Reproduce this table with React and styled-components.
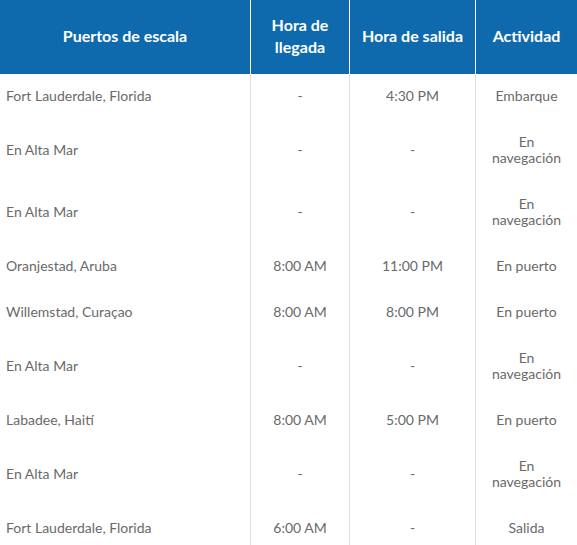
import React from "react";
import styled, { createGlobalStyle } from "styled-components";

const Global = createGlobalStyle`
  html, body { margin: 0; padding: 0; background: #fff; }
  body { font-family: Lato, "Open Sans", sans-serif; }
`;

const Table = styled.table`
  width: 577px;
  table-layout: fixed;
  border-collapse: separate;
  border-spacing: 0;
`;

const Th = styled.th`
  background: #0f6aad;
  color: #fff;
  font-weight: 700;
  font-size: 16px;
  line-height: 22px;
  padding: 14px 6px 16px;
  height: 44px;
  text-align: center;
  vertical-align: middle;
  border-left: ${(p) => (p.$first ? "none" : "1px solid #fff")};
`;

const Td = styled.td`
  color: #6a6a6a;
  font-size: 14px;
  font-weight: 400;
  line-height: 16px;
  padding: 14px ${(p) => (p.$left ? "6px" : "8px")} 16px;
  text-align: ${(p) => (p.$left ? "left" : "center")};
  vertical-align: middle;
  border-left: ${(p) => (p.$left ? "none" : "1px solid #dedede")};
`;

const rows = [
  ["Fort Lauderdale, Florida", "-", "4:30 PM", "Embarque"],
  ["En Alta Mar", "-", "-", "En navegación"],
  ["En Alta Mar", "-", "-", "En navegación"],
  ["Oranjestad, Aruba", "8:00 AM", "11:00 PM", "En puerto"],
  ["Willemstad, Curaçao", "8:00 AM", "8:00 PM", "En puerto"],
  ["En Alta Mar", "-", "-", "En navegación"],
  ["Labadee, Haití", "8:00 AM", "5:00 PM", "En puerto"],
  ["En Alta Mar", "-", "-", "En navegación"],
  ["Fort Lauderdale, Florida", "6:00 AM", "-", "Salida"],
];

export default function App() {
  return (
    <>
      <Global />
      <Table>
        <colgroup>
          <col style={{ width: 250 }} />
          <col style={{ width: 99 }} />
          <col style={{ width: 126 }} />
          <col style={{ width: 102 }} />
        </colgroup>
        <thead>
          <tr>
            <Th $first>Puertos de escala</Th>
            <Th>Hora de llegada</Th>
            <Th>Hora de salida</Th>
            <Th>Actividad</Th>
          </tr>
        </thead>
        <tbody>
          {rows.map((r, i) => (
            <tr key={i}>
              <Td $left>{r[0]}</Td>
              <Td>{r[1]}</Td>
              <Td>{r[2]}</Td>
              <Td>{r[3]}</Td>
            </tr>
          ))}
        </tbody>
      </Table>
    </>
  );
}
